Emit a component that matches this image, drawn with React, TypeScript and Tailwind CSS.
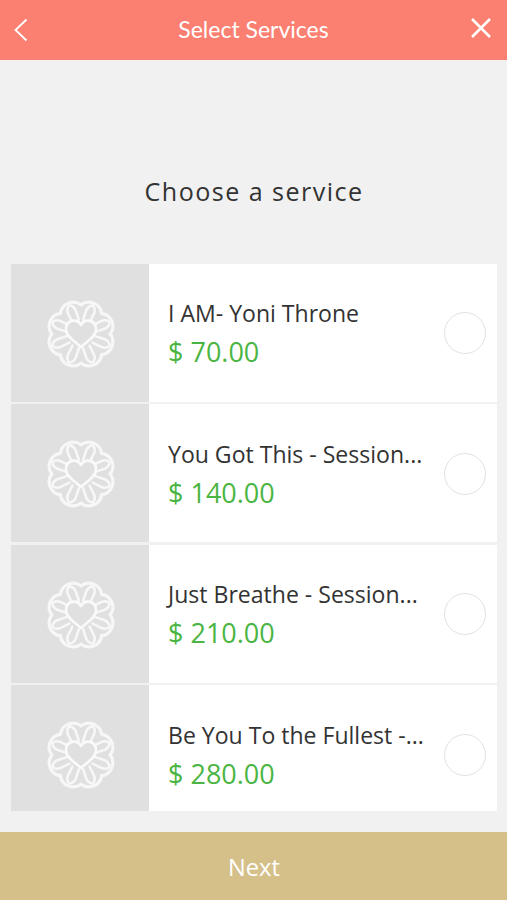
import { useState } from 'react'

interface Service {
  id: number
  name: string
  price: string
}

const SERVICES: Service[] = [
  { id: 1, name: 'I AM- Yoni Throne', price: '$ 70.00' },
  { id: 2, name: 'You Got This - Session...', price: '$ 140.00' },
  { id: 3, name: 'Just Breathe - Session...', price: '$ 210.00' },
  { id: 4, name: 'Be You To the Fullest -...', price: '$ 280.00' },
]

const PETALS = [22.5, 67.5, 112.5, 157.5, 202.5, 247.5, 292.5, 337.5]

function FlowerLogo() {
  return (
    <svg width="72" height="72" viewBox="-36 -36 72 72" fill="none" stroke="#fff" strokeLinecap="round" strokeLinejoin="round">
      <g opacity="0.75">
        {PETALS.map((angle) => (
          <g key={angle} transform={`rotate(${angle})`}>
            <path d="M-11.2 -27 A13 13 0 0 1 11.2 -27" strokeWidth="3.2" />
            <path d="M-3.5 -14 L-4.2 -24 Q-4 -29 0 -31 Q4 -29 4.2 -24 L3.5 -14" strokeWidth="2.6" />
          </g>
        ))}
      </g>
      <path
        d="M0 13 C-4 9 -15 3 -15 -4.5 C-15 -14.5 -4 -16 0 -9 C4 -16 15 -14.5 15 -4.5 C15 3 4 9 0 13 Z"
        stroke="#fafafa"
        strokeWidth="2.6"
        fill="#e0e0e0"
      />
    </svg>
  )
}

interface ServiceRowProps {
  service: Service
  selected: boolean
  onSelect: () => void
}

function ServiceRow({ service, selected, onSelect }: ServiceRowProps) {
  return (
    <div className="flex h-[138px] shrink-0 bg-white">
      <div className="flex w-[138px] shrink-0 items-center justify-center bg-[#e0e0e0] pt-0.5 pl-0.5">
        <FlowerLogo />
      </div>
      <div className="min-w-0 flex-1 pt-[31.5px] pl-[19px] whitespace-nowrap">
        <div className="text-[23.05px] leading-9 text-[#333]">{service.name}</div>
        <div className="text-[27px] leading-[42px] text-[#4bb543]">{service.price}</div>
      </div>
      <button
        onClick={onSelect}
        aria-label={service.name}
        className={`mt-px mr-[11px] size-[42px] shrink-0 self-center rounded-full border-[1.5px] border-[#e2e2e2] ${selected ? 'bg-[#4bb543]' : 'bg-white'}`}
      />
    </div>
  )
}

export default function App() {
  const [selected, setSelected] = useState<number | null>(null)

  return (
    <div className="flex h-[900px] w-[507px] flex-col overflow-hidden bg-[#f1f1f1] font-['Open_Sans',sans-serif]">
      {/* Header */}
      <header className="flex h-[59.5px] shrink-0 items-center justify-between bg-[#fc8072] pr-4 pl-3.5 text-white">
        <button aria-label="Back">
          <svg width="14" height="24" viewBox="0 0 14 24" fill="none" stroke="currentColor" strokeWidth="1.8">
            <path d="M12.5 1.5 L1.5 12 L12.5 22.5" />
          </svg>
        </button>
        <h1 className="pb-px pl-2 font-['Lato',sans-serif] text-[23px] leading-8">Select Services</h1>
        <button aria-label="Close" className="pb-1">
          <svg width="20" height="20" viewBox="0 0 20 20" fill="none" stroke="currentColor" strokeWidth="2.5">
            <path d="M1 1 L19 19 M19 1 L1 19" />
          </svg>
        </button>
      </header>

      <h2 className="mt-[111px] shrink-0 pl-px text-center text-[25.1px] leading-10 tracking-[1.45px] text-[#333]">
        Choose a service
      </h2>

      {/* Service list */}
      <main className="mr-[10px] ml-[11px] mt-[53px] mb-[21px] flex min-h-0 flex-1 flex-col gap-[2.5px] overflow-hidden">
        {SERVICES.map((service) => (
          <ServiceRow
            key={service.id}
            service={service}
            selected={selected === service.id}
            onSelect={() => setSelected(service.id)}
          />
        ))}
      </main>

      <button className="h-[68px] shrink-0 bg-[#d6c08a] pt-[3px] pl-px text-[23.6px] text-white">Next</button>
    </div>
  )
}
